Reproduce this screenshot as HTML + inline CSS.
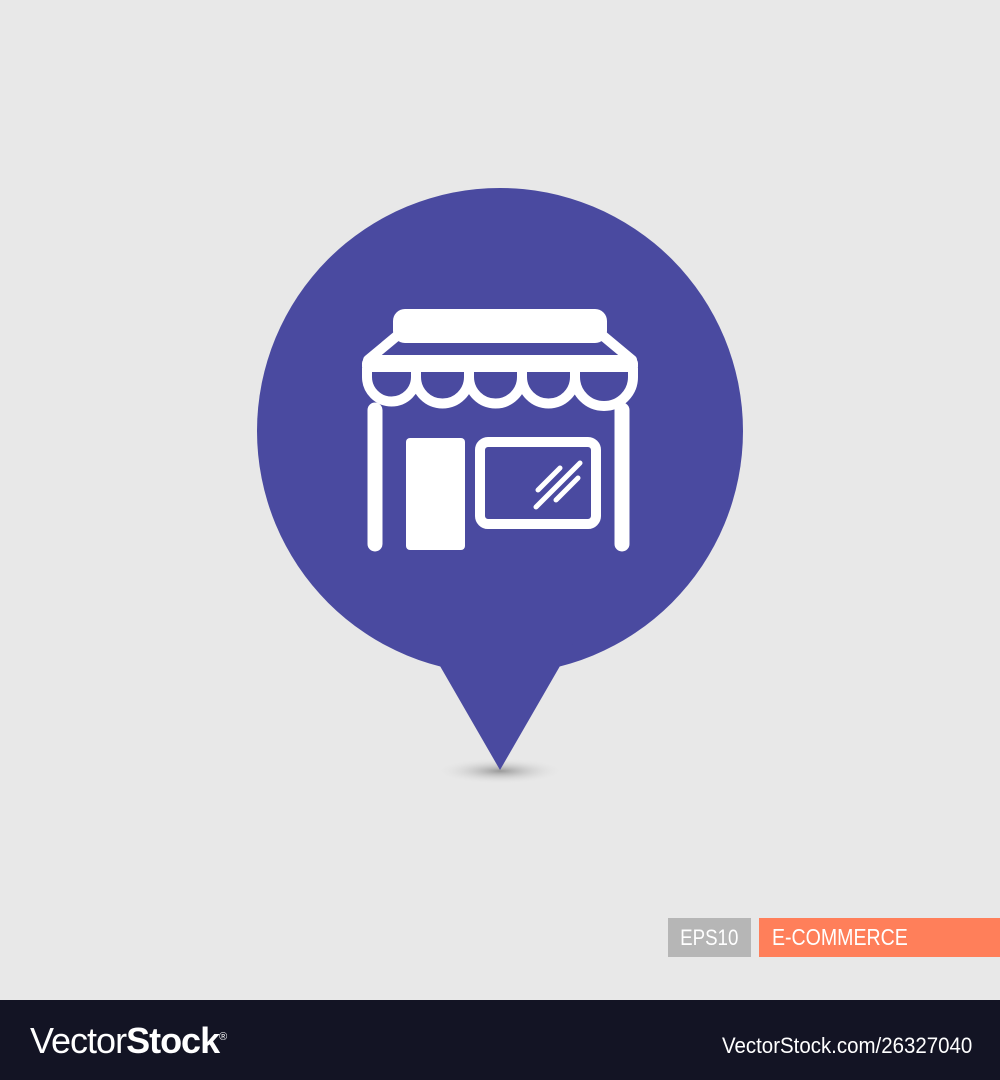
<!DOCTYPE html>
<html><head><style>
body{margin:0;width:1000px;height:1080px;background:#e8e8e8;position:relative;overflow:hidden;font-family:"Liberation Sans",sans-serif}
.foot{position:absolute;left:0;top:1000px;width:1000px;height:80px;background:#131424}
</style></head><body>
<svg width="1000" height="1000" style="position:absolute;left:0;top:0">
<defs><radialGradient id="sh"><stop offset="0" stop-color="#999"/><stop offset="1" stop-color="#e8e8e8" stop-opacity="0"/></radialGradient></defs>
<ellipse cx="500" cy="771" rx="64" ry="13" fill="url(#sh)"/>
<circle cx="500" cy="431" r="243" fill="#4a4aa0"/>
<path d="M425 640 L500 770 L575 640 Z" fill="#4a4aa0"/>
<g fill="#fff">
<rect x="393" y="309" width="214" height="34" rx="12"/>
<path d="M398 335 L368 360 L632 360 L602 335 Z" fill="none" stroke="#fff" stroke-width="10" stroke-linejoin="round"/>
<rect x="362" y="358" width="276" height="14" rx="5"/>
</g>
<g fill="none" stroke="#fff" stroke-width="10">
<path d="M367 368 v9 a24.5 24.5 0 0 0 49 0 v-9 M416 368 v9 a26.5 26.5 0 0 0 53 0 v-9 M469 368 v9 a26.5 26.5 0 0 0 53 0 v-9 M522 368 v9 a26.5 26.5 0 0 0 53 0 v-9 M575 368 v9 a29 29 0 0 0 58 0 v-9"/>
<path d="M375 410 V544 M622 410 V544" stroke-width="15" stroke-linecap="round"/>
<rect x="480" y="442" width="116" height="82" rx="8"/>
<path d="M538 490 L560 468 M536 507 L580 463 M556 500 L578 478" stroke-width="5" stroke-linecap="round"/>
</g>
<rect x="406" y="438" width="59" height="112" rx="4" fill="#fff"/>
</svg>
<div style="position:absolute;left:668px;top:918px;width:83px;height:39px;background:#b6b6b6;color:#fff;font-size:22px;line-height:39px;text-align:center"><span style="display:inline-block;transform:scaleX(0.85)">EPS10</span></div>
<div style="position:absolute;left:759px;top:918px;width:241px;height:39px;background:#ff7f5a;color:#fff;font-size:23px;line-height:39px;padding-left:13px;box-sizing:border-box"><span style="display:inline-block;transform:scaleX(0.85);transform-origin:left">E-COMMERCE</span></div>
<div class="foot">
<div style="position:absolute;left:30px;top:20px;color:#fff;font-size:36px;letter-spacing:-1px"><span style="font-weight:300">Vector</span><b>Stock</b><sup style="font-size:11px">®</sup></div>
<div style="position:absolute;left:722px;top:33px;color:#fff;font-size:22px;transform:scaleX(0.93);transform-origin:left;white-space:nowrap">VectorStock.com/26327040</div>
</div>
</body></html>
